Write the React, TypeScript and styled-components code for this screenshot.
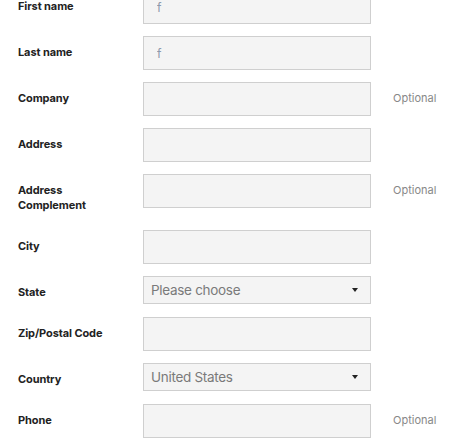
import React from "react";
import styled, { createGlobalStyle } from "styled-components";

const Global = createGlobalStyle`
  html, body { margin: 0; padding: 0; background: #fff; }
  body { font-family: Inter, "Noto Sans", Arial, sans-serif; }
  * { box-sizing: border-box; }
`;

const Form = styled.form`
  margin-top: -10px;
  padding-left: 18px;
  display: flex;
  flex-direction: column;
  gap: 12px;
`;

const Row = styled.div`
  display: grid;
  grid-template-columns: 125px 228px auto;
  align-items: start;
`;

const Label = styled.label`
  font-size: 11px;
  font-weight: 700;
  line-height: 15px;
  color: #222;
  padding: 9px 0 5px;
  letter-spacing: -0.1px;
`;

const Hint = styled.span`
  font-size: 11px;
  line-height: 15px;
  color: #888;
  padding: 9px 0 0 22px;
`;

const TextInput = styled.input`
  width: 228px;
  height: 34px;
  border: 1px solid #cfcfcf;
  background: #f4f4f4;
  padding: 0 13px;
  font-family: Inter, "Noto Sans", Arial, sans-serif;
  font-size: 12px;
  color: #8d9aab;
  outline: none;
`;

const SelectWrap = styled.div`
  position: relative;
  width: 228px;
  height: 28px;
  &::after {
    content: "";
    position: absolute;
    right: 13px;
    top: 12px;
    border-left: 3.5px solid transparent;
    border-right: 3.5px solid transparent;
    border-top: 4px solid #222;
    pointer-events: none;
  }
`;

const Select = styled.select`
  appearance: none;
  -webkit-appearance: none;
  width: 100%;
  height: 28px;
  border: 1px solid #cfcfcf;
  border-radius: 0;
  background: #f4f4f4;
  padding: 0 7px;
  font-family: Inter, "Noto Sans", Arial, sans-serif;
  font-size: 13.5px;
  letter-spacing: -0.3px;
  color: #7a7a7a;
  outline: none;
`;

type Field = {
  label: string;
  kind?: "text" | "select";
  value?: string;
  optional?: boolean;
};

const fields: Field[] = [
  { label: "First name", value: "f" },
  { label: "Last name", value: "f" },
  { label: "Company", optional: true },
  { label: "Address" },
  { label: "Address Complement", optional: true },
  { label: "City" },
  { label: "State", kind: "select", value: "Please choose" },
  { label: "Zip/Postal Code" },
  { label: "Country", kind: "select", value: "United States" },
  { label: "Phone", optional: true },
];

export default function App() {
  return (
    <>
      <Global />
      <Form onSubmit={(e) => e.preventDefault()}>
        {fields.map((f, i) => (
          <Row key={i}>
            <Label>
              {f.label === "Address Complement" ? (
                <>
                  Address
                  <br />
                  Complement
                </>
              ) : (
                f.label
              )}
            </Label>
            {f.kind === "select" ? (
              <SelectWrap>
                <Select defaultValue={f.value}>
                  <option>{f.value}</option>
                </Select>
              </SelectWrap>
            ) : (
              <TextInput defaultValue={f.value ?? ""} />
            )}
            {f.optional ? <Hint>Optional</Hint> : <span />}
          </Row>
        ))}
      </Form>
    </>
  );
}
